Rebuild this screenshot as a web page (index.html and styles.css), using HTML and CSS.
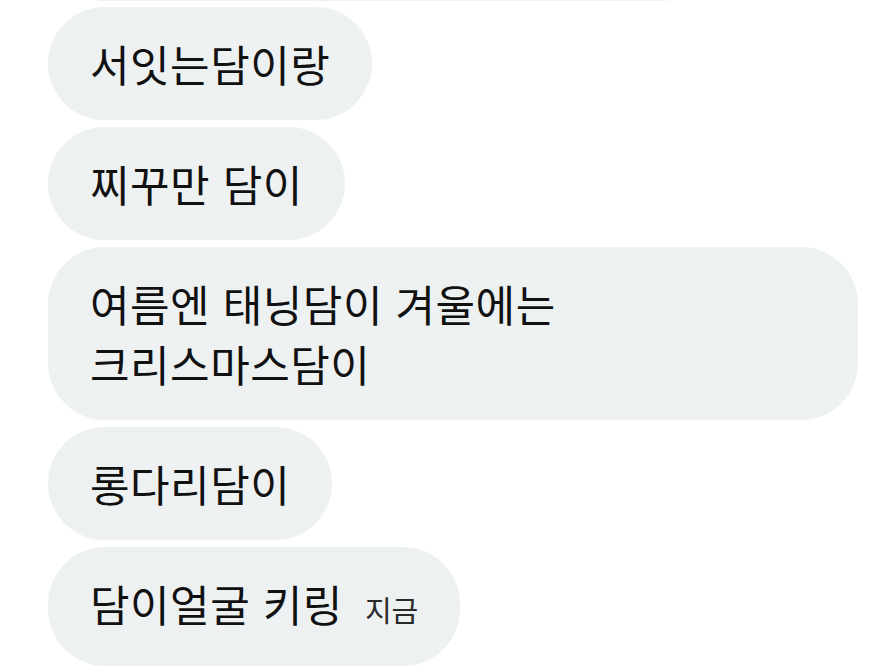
FILE: index.html
```html
<!DOCTYPE html>
<html lang="ko">
<head>
    <meta charset="UTF-8">
    <meta name="viewport" content="width=device-width, initial-scale=1.0">
    <title>채팅</title>
    <link rel="stylesheet" href="styles.css">
</head>
<body>
    <div class="chat">
        <div class="bubble prev"></div>
        <div class="bubble">서잇는담이랑</div>
        <div class="bubble">찌꾸만 담이</div>
        <div class="bubble">여름엔 태닝담이 겨울에는 크리스마스담이</div>
        <div class="bubble">롱다리담이</div>
        <div class="bubble">담이얼굴 키링<span class="time">지금</span></div>
    </div>
</body>
</html>
```

FILE: styles.css
```css
body { margin: 0; background: #fff; font-family: "Noto Sans CJK KR", "Noto Sans", sans-serif; color: #111; overflow: hidden; }
.chat {
    display: flex; flex-direction: column; align-items: flex-start;
    gap: 7px; padding: 0 18px 0 48px; margin-top: -113px;
}
.bubble {
    background: #eef1f2; border-radius: 57px;
    padding: 26px 42px 27px; font-size: 43px; line-height: 60px;
    letter-spacing: 0.5px; max-width: 726px; word-break: keep-all;
}
.prev { width: 585px; height: 61px; margin-bottom: -1px; }
.time { font-size: 29px; letter-spacing: 0; color: #2a2a2a; margin-left: 22px; }
```
